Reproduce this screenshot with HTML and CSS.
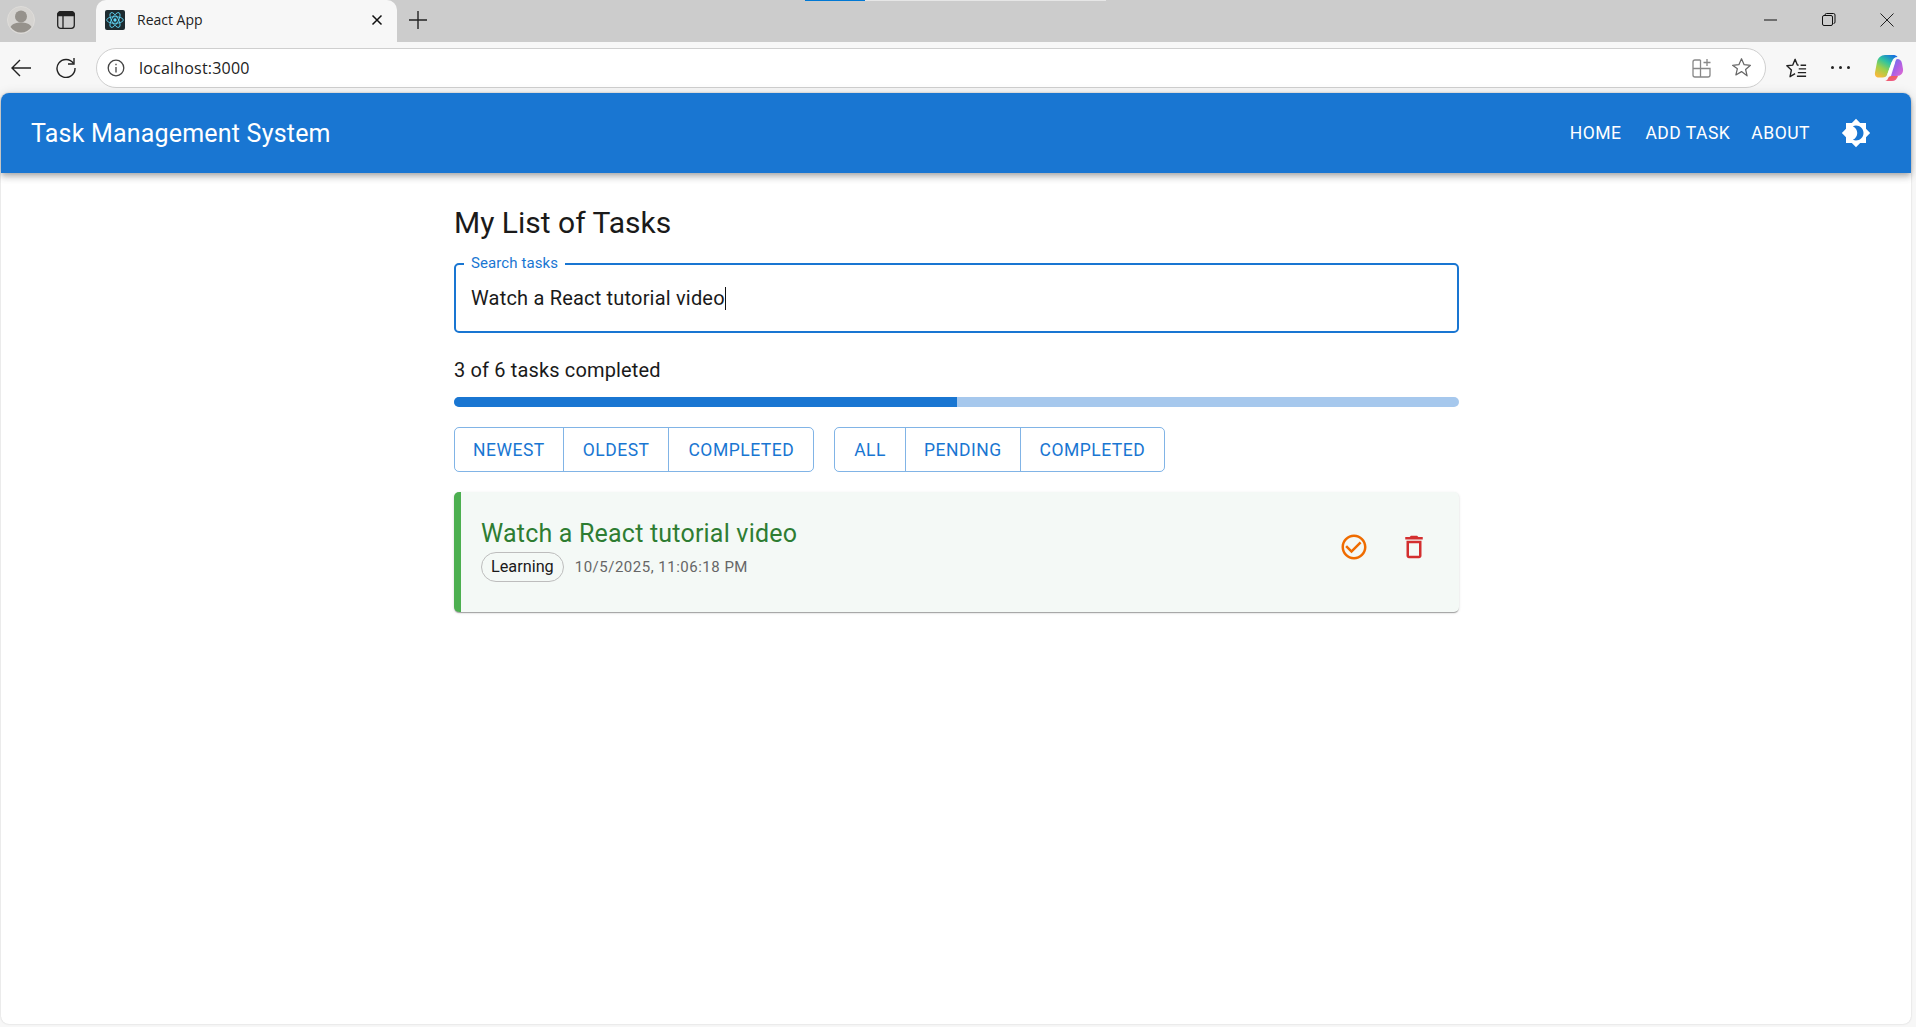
FILE: index.html
```html
<!DOCTYPE html>
<html lang="en">
<head>
  <meta charset="UTF-8" />
  <meta name="viewport" content="width=device-width, initial-scale=1.0"/>
  <title>React App</title>
  <link rel="stylesheet" href="styles.css">
</head>
<body>
  <div class="loading-strip"><span class="loading-done"></span><span class="loading-rest"></span></div>

  <div class="titlebar">
    <div class="avatar">
      <svg width="28" height="28" viewBox="0 0 28 28"><circle cx="14" cy="14" r="13.5" fill="#d6d4d1" stroke="#dedcd9"/><circle cx="14" cy="10.5" r="6" fill="#96928c"/><path d="M3.5 21c2-3.600 6-4.500 10.500-4.500s8.500 .9 10.500 4.500c-2.500 3.500-6 5.500-10.500 5.500S6 24.500 3.500 21z" fill="#96928c"/></svg>
    </div>
    <div class="tabs-icon">
      <svg width="18" height="18" viewBox="0 0 18 18" fill="none" stroke="#222" stroke-width="1.300"><rect x=".7" y=".7" width="16.600" height="16.600" rx="3"/><path d="M.7 4.500h16.600V4A3.300 3.300 0 0 0 14 .7H4A3.300 3.300 0 0 0 .7 4z" fill="#222"/><path d="M6 4.500v12.800"/></svg>
    </div>
    <div class="browser-tab">
      <div class="favicon">
        <svg width="20" height="20" viewBox="-12 -12 24 24" fill="none" stroke="#61dafb" stroke-width="1"><circle r="2" fill="#61dafb" stroke="none"/><ellipse rx="10" ry="4"/><ellipse rx="10" ry="4" transform="rotate(60)"/><ellipse rx="10" ry="4" transform="rotate(120)"/></svg>
      </div>
      <span class="tab-title">React App</span>
      <svg class="tab-close" width="12" height="12" viewBox="0 0 12 12" stroke="#111" stroke-width="1.500"><path d="M1.500 1.500l9 9M10.500 1.500l-9 9"/></svg>
    </div>
    <svg class="new-tab" width="18" height="18" viewBox="0 0 18 18" stroke="#222" stroke-width="1.400"><path d="M9 0v18M0 9h18"/></svg>
    <div class="window-controls">
      <svg width="14" height="14" viewBox="0 0 14 14" stroke="#111" stroke-width="1"><path d="M0 7h13"/></svg>
      <svg width="14" height="14" viewBox="0 0 14 14" fill="none" stroke="#111" stroke-width="1"><rect x=".5" y="2.500" width="10" height="10" rx="1.500"/><path d="M3 2.500V2A1.500 1.500 0 0 1 4.500 .5h7A1.500 1.500 0 0 1 13 2v7a1.500 1.500 0 0 1-1.500 1.500"/></svg>
      <svg width="14" height="14" viewBox="0 0 14 14" stroke="#222" stroke-width="1"><path d="M.5 .5l13 13M13.500 .5l-13 13"/></svg>
    </div>
  </div>

  <div class="toolbar">
    <svg class="nav-icon" width="20" height="20" viewBox="0 0 20 20" fill="none" stroke="#222" stroke-width="1.400"><path d="M20 10H1M9 2l-8 8 8 8"/></svg>
    <svg class="nav-icon" width="20" height="20" viewBox="0 0 20 20" fill="none" stroke="#222" stroke-width="1.400"><path d="M17.500 5.500A9 9 0 1 0 19 10"/><path d="M18 0v6h-6"/></svg>
    <div class="address-bar">
      <svg width="18" height="18" viewBox="0 0 18 18" fill="none" stroke="#444" stroke-width="1.300"><circle cx="9" cy="9" r="7.800"/><path d="M9 8v5.500M9 4.800v1.500"/></svg>
      <span class="url">localhost:3000</span>
      <svg class="addr-right" width="20" height="20" viewBox="0 0 20 20" fill="none" stroke="#888" stroke-width="1.300"><path d="M8.500 2H3a2 2 0 0 0-2 2v13a2 2 0 0 0 2 2h13a2 2 0 0 0 2-2V10.500H1M8.500 2v17"/><path d="M15 1v7M11.500 4.500h7"/></svg>
      <svg width="21" height="21" viewBox="0 0 24 24" fill="none" stroke="#666" stroke-width="1.400" stroke-linejoin="round"><path d="M12 2l3 6.800 7.200 .7-5.500 4.800 1.700 7.200L12 16.700l-6.400 3.800 1.700-7.200L1.800 9.500 9 8.800z"/></svg>
    </div>
    <svg class="fav-list" width="22" height="22" viewBox="0 0 24 24" fill="none" stroke="#222" stroke-width="1.500" stroke-linejoin="round"><path d="M15 8.900l-1.500-.1L11 2.500 8.500 8.800 2 9.500l5 4.600L5.500 21.500l5.500-3.300"/><path d="M15 13h8M14 17h9M13 21h10M17 9h6"/></svg>
    <div class="dots"><i></i><i></i><i></i></div>
    <svg class="copilot" width="30" height="30" viewBox="0 0 30 30">
      <defs>
        <linearGradient id="copA" x1=".2" y1="1" x2=".8" y2="0"><stop offset="0" stop-color="#f8b93c"/><stop offset=".35" stop-color="#9ed04a"/><stop offset=".65" stop-color="#2fc4a0"/><stop offset="1" stop-color="#1670e0"/></linearGradient>
        <linearGradient id="copB" x1="0" y1="0" x2="1" y2="1"><stop offset="0" stop-color="#4a7ff0"/><stop offset=".5" stop-color="#a95fe6"/><stop offset="1" stop-color="#e46ad0"/></linearGradient>
        <linearGradient id="copC" x1="0" y1="0" x2="1" y2="1"><stop offset="0" stop-color="#f0603c"/><stop offset="1" stop-color="#ee5a9c"/></linearGradient>
      </defs>
      <path d="M11 2h8c2 0 3.500 .5 4.500 2-3 0-4.500 1.500-5.500 4.500L13.500 21c-.8 2.500-2.500 3.500-5 3.500H5c-3 0-4.500-2-4-5L3 9c.8-4 4-7 8-7z" fill="url(#copA)"/>
      <path d="M23 6c3 0 4.500 1.500 5 4.500l1 5.500c.5 4-2 7-6 7h-6l4-13c.5-2 1-3.500 2-4z" fill="url(#copB)"/>
      <path d="M11 28h7c3 0 5-2 6-5h-6.500c-2 0-3 1-3.500 2.500-.6 1.500-1.700 2.500-3 2.500z" fill="url(#copC)"/>
      <path d="M19 10l-4 11" stroke="#fff" stroke-width="3.200" stroke-linecap="round" opacity=".92"/>
    </svg>
  </div>

  <div class="page">
    <header class="appbar">
      <div class="app-title">Task Management System</div>
      <nav class="app-nav">
        <a class="nav-link nav-home">Home</a>
        <a class="nav-link nav-add">Add Task</a>
        <a class="nav-link">About</a>
      </nav>
      <svg class="theme-icon" width="30" height="30" viewBox="0 0 24 24" fill="#fff"><path d="M20 8.690V4h-4.690L12 .69 8.690 4H4v4.690L.69 12 4 15.310V20h4.690L12 23.310 15.310 20H20v-4.690L23.310 12 20 8.690zM12 18c-.89 0-1.740-.2-2.500-.55C11.560 16.500 13 14.420 13 12s-1.440-4.500-3.500-5.450C10.260 6.200 11.110 6 12 6c3.310 0 6 2.690 6 6s-2.690 6-6 6z"/></svg>
    </header>

    <main class="container">
      <h1 class="page-title">My List of Tasks</h1>

      <div class="search-field">
        <span class="search-label">Search tasks</span>
        <span class="search-value">Watch a React tutorial video</span><span class="caret"></span>
      </div>

      <div class="progress-text">3 of 6 tasks completed</div>
      <div class="progress-track"><div class="progress-fill" style="width: 50%"></div></div>

      <div class="filters">
        <div class="btn-group">
          <button class="group-btn tight">Newest</button>
          <button class="group-btn">Oldest</button>
          <button class="group-btn">Completed</button>
        </div>
        <div class="btn-group">
          <button class="group-btn">All</button>
          <button class="group-btn tight">Pending</button>
          <button class="group-btn">Completed</button>
        </div>
      </div>

      <div class="task-card">
        <div class="task-info">
          <div class="task-title">Watch a React tutorial video</div>
          <div class="task-meta">
            <span class="chip">Learning</span>
            <span class="task-date">10/5/2025, 11:06:18 PM</span>
          </div>
        </div>
        <div class="task-actions">
          <svg width="30" height="30" viewBox="0 0 24 24" fill="#ef6c00"><path d="M16.590 7.580 10 14.170l-3.590-3.580L5 12l5 5 8-8zM12 2C6.480 2 2 6.480 2 12s4.480 10 10 10 10-4.480 10-10S17.520 2 12 2zm0 18c-4.420 0-8-3.580-8-8s3.580-8 8-8 8 3.580 8 8-3.580 8-8 8z"/></svg>
          <svg width="30" height="30" viewBox="0 0 24 24" fill="#d32f2f"><path d="M6 19c0 1.100.9 2 2 2h8c1.100 0 2-.9 2-2V7H6v12zM8 9h8v10H8V9zm7.500-5l-1-1h-5l-1 1H5v2h14V4z"/></svg>
        </div>
      </div>
    </main>
  </div>
</body>
</html>
```

FILE: styles.css
```css
* {
  box-sizing: border-box;
}

html, body {
  height: 100%;
}

body {
  margin: 0;
  display: flex;
  flex-direction: column;
  position: relative;
  background: #f7f7f7;
  color: #1a1a1a;
  font-family: Roboto, 'Liberation Sans', sans-serif;
  overflow: hidden;
}

.loading-strip {
  position: absolute;
  top: 0;
  left: 805px;
  display: flex;
  height: 1px;
}

.loading-done {
  width: 60px;
  background: #0078d4;
}

.loading-rest {
  width: 241px;
  background: #e6e6e6;
}

.titlebar {
  display: flex;
  align-items: center;
  height: 42px;
  padding-bottom: 2px;
  background: #cccccc;
  flex-shrink: 0;
}

.avatar {
  display: flex;
  margin-left: 7px;
}

.tabs-icon {
  display: flex;
  margin-left: 22px;
}

.browser-tab {
  display: flex;
  align-items: center;
  align-self: stretch;
  width: 301px;
  margin-left: 21px;
  margin-bottom: -2px;
  padding: 0 13px 2px 9px;
  background: #f7f7f7;
  border-radius: 10px 10px 0 0;
}

.favicon {
  display: flex;
  align-items: center;
  justify-content: center;
  width: 20px;
  height: 20px;
  background: #1d2b30;
  border-radius: 2px;
}

.tab-title {
  margin-left: 12px;
  margin-bottom: 2px;
  font-family: 'Open Sans', 'Liberation Sans', sans-serif;
  font-size: 14px;
  color: #222;
}

.tab-close {
  margin-left: auto;
  margin-right: 1px;
}

.new-tab {
  margin-left: 12px;
}

.window-controls {
  display: flex;
  align-items: center;
  gap: 44px;
  margin-left: auto;
  padding-right: 22px;
}

.toolbar {
  display: flex;
  align-items: center;
  height: 51px;
  background: #f7f7f7;
  flex-shrink: 0;
}

.nav-icon {
  margin-left: 11px;
}

.nav-icon + .nav-icon {
  margin-left: 25px;
}

.address-bar {
  display: flex;
  align-items: center;
  width: 1670px;
  height: 40px;
  margin-left: 20px;
  padding: 0 13px 0 10px;
  background: #fff;
  border: 1px solid #cfcfcf;
  border-radius: 20px;
}

.url {
  margin-left: 14px;
  font-family: 'Open Sans', 'Liberation Sans', sans-serif;
  font-size: 16px;
  letter-spacing: 0.2px;
  color: #222;
}

.addr-right {
  margin-left: auto;
  margin-right: 19px;
}

.fav-list {
  margin-left: 19px;
}

.dots {
  display: flex;
  gap: 5px;
  margin-left: 24px;
}

.dots i {
  width: 3px;
  height: 3px;
  border-radius: 50%;
  background: #222;
}

.copilot {
  margin-left: 24px;
}

.page {
  flex: 1;
  margin: 0 5px 3px 1px;
  background: #fff;
  border-radius: 8px;
  box-shadow: 0 0 2px rgba(0,0,0,0.18);
}

.appbar {
  display: flex;
  align-items: center;
  height: 80px;
  padding: 0 30px;
  background: #1976d2;
  color: #fff;
  border-radius: 8px 8px 0 0;
  box-shadow: 0 2px 5px -1px rgba(0,0,0,0.2), 0 5px 6px 0 rgba(0,0,0,0.14), 0 1px 12px 0 rgba(0,0,0,0.12);
}

.app-title {
  font-size: 25px;
  font-weight: 400;
  letter-spacing: 0.2px;
}

.app-nav {
  display: flex;
  margin-left: auto;
}

.nav-link {
  padding: 7px 10px;
  font-size: 17.5px;
  font-weight: 400;
  letter-spacing: 0.5px;
  text-transform: uppercase;
}

.nav-home {
  margin-right: 4px;
}

.nav-add {
  margin-right: 1px;
}

.theme-icon {
  margin-left: 21px;
  margin-right: 10px;
}

.container {
  width: 1005px;
  margin-left: 453px;
}

.page-title {
  margin: 30px 0 0;
  font-size: 30px;
  font-weight: 400;
  line-height: 40px;
  color: #1a1a1a;
}

.search-field {
  position: relative;
  display: flex;
  align-items: center;
  height: 70px;
  margin-top: 20px;
  padding: 0 15px;
  border: 2.5px solid #1976d2;
  border-radius: 5px;
  font-size: 20px;
  letter-spacing: 0.19px;
}

.search-label {
  position: absolute;
  top: -11px;
  left: 8px;
  padding: 0 7px;
  background: #fff;
  font-size: 15px;
  letter-spacing: 0.1px;
  line-height: 18px;
  color: #1976d2;
}

.caret {
  width: 1px;
  height: 23px;
  background: #111;
}

.progress-text {
  margin-top: 23px;
  font-size: 20px;
  letter-spacing: 0.15px;
  line-height: 28px;
}

.progress-track {
  height: 10px;
  margin-top: 13px;
  background: #a6c8ed;
  border-radius: 5px;
  overflow: hidden;
}

.progress-fill {
  height: 100%;
  background: #1976d2;
}

.filters {
  display: flex;
  gap: 20px;
  margin-top: 20px;
}

.btn-group {
  display: flex;
  height: 45px;
  border: 1px solid rgba(25,118,210,0.55);
  border-radius: 5px;
}

.group-btn {
  padding: 0 19px;
  background: none;
  border: 0;
  border-left: 1px solid rgba(25,118,210,0.55);
  font-family: inherit;
  font-size: 17.5px;
  font-weight: 400;
  letter-spacing: 0.5px;
  text-transform: uppercase;
  color: #1976d2;
}

.group-btn.tight {
  padding: 0 18px;
}

.group-btn:first-child {
  border-left: 0;
}

.task-card {
  display: flex;
  align-items: center;
  height: 120px;
  margin-top: 20px;
  padding: 0 30px 10px 20px;
  background: #f4f9f6;
  border-left: 7px solid #4caf50;
  border-radius: 5px;
  box-shadow: 0 2px 1px -1px rgba(0,0,0,0.2), 0 1px 1px 0 rgba(0,0,0,0.14), 0 1px 3px 0 rgba(0,0,0,0.12);
}

.task-info {
  flex: 1;
  padding-top: 3px;
}

.task-title {
  font-size: 25px;
  font-weight: 400;
  letter-spacing: 0.2px;
  line-height: 36px;
  color: #2e7d32;
}

.task-meta {
  display: flex;
  align-items: center;
  gap: 11px;
}

.chip {
  display: flex;
  align-items: center;
  height: 30px;
  padding: 0 9px;
  border: 1px solid #bdbdbd;
  border-radius: 15px;
  font-size: 16.25px;
}

.task-date {
  font-size: 15px;
  letter-spacing: 0.5px;
  color: #666;
}

.task-actions {
  display: flex;
  gap: 30px;
}
```
